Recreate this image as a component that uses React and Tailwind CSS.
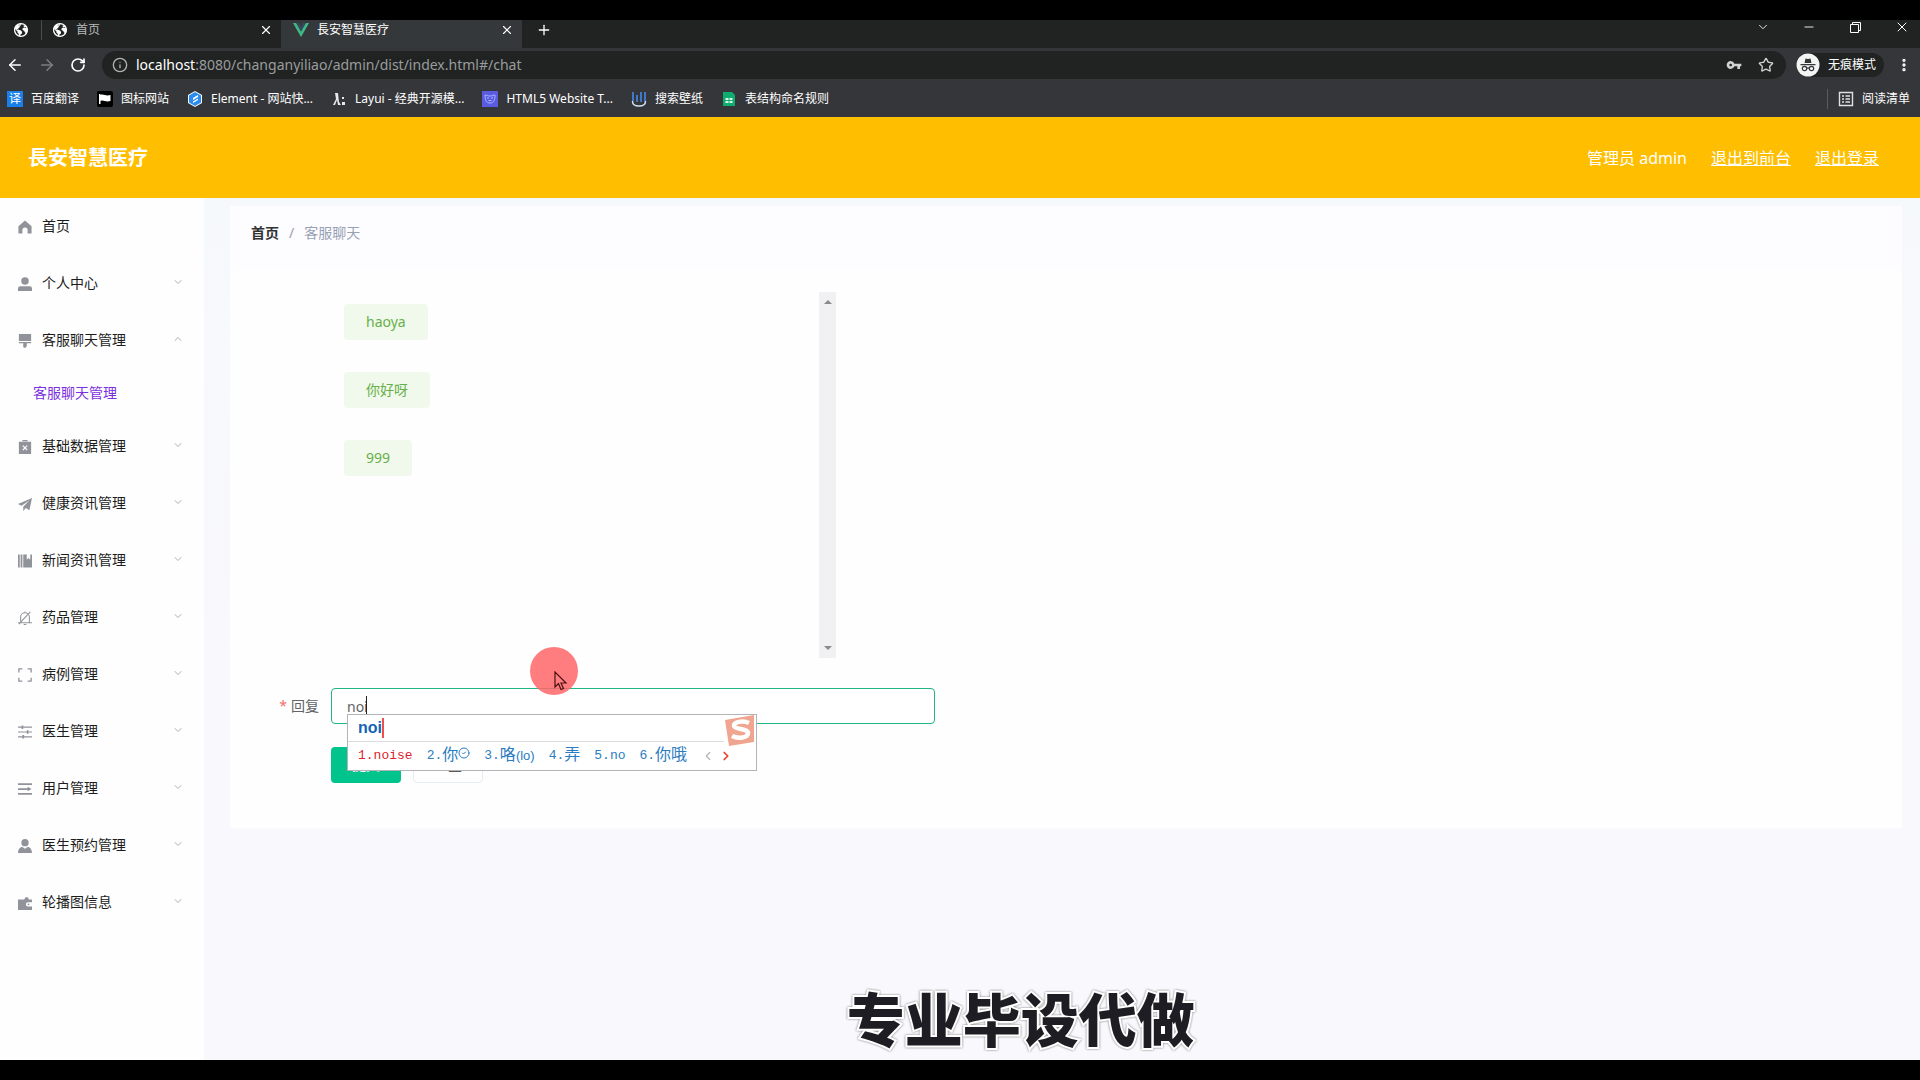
import { ArrowLeft, ArrowRight, RotateCw, Info, X, Plus, ChevronDown, ChevronUp, ChevronLeft, ChevronRight, CircleCheck, Minus, Star, EllipsisVertical } from 'lucide-react';
import { useState } from 'react';
import { IoEarthSharp } from 'react-icons/io5';
import { MdVpnKey } from 'react-icons/md';

const IconHome = () => (
  <path d="M8 0.500 0.500 7v8.500h4.500v-4a3 3 0 0 1 6 0v4h4.500V7z" />
);

const IconUser = () => (
  <>
    <circle cx="8" cy="4.500" r="4.300" />
    <path d="M0 16v-3A2.500 2.500 0 0 1 2.500 10.500h11a2.500 2.500 0 0 1 2.500 2.500V16z" />
  </>
);

const IconBrush = () => (
  <path d="M1 0h14v8H1zM1 9h14v1.500H10V14l-2 2-2-1V10.500H1z" />
);

const IconClipboard = () => (
  <>
    <path d="M5 0h6v1.500H5zM1 2h14v14H1z" />
    <path d="m5.500 6.500 5 5m0-5-5 5" stroke="#fff" strokeWidth="1.400" />
  </>
);

const IconSend = () => <path d="M16 1 0 8l4 2L13 4 6 11v5l3-3.500 4 2.500z" />;

const IconNotebook = () => (
  <path d="M0 0.500h2v15H0zM3 0.500h2v15H3zM6 0.500h4v6l2-2 2 2V0.500h2v15H6z" />
);

const IconMuteBell = () => (
  <g fill="none" stroke="currentColor" strokeWidth="1.200">
    <path d="M0 13.500h16M3 13V7a5 5 0 0 1 10 0v6M8 2V0.500M6.500 15.500h3M1 15 14 1" />
  </g>
);

const IconFullScreen = () => (
  <path d="M1 5V1h4M11 1h4v4M15 11v4h-4M5 15H1v-4" fill="none" stroke="currentColor" strokeWidth="1.500" />
);

const IconSliders = () => (
  <g fill="none" stroke="currentColor" strokeWidth="1.400">
    <path d="M0 2.500h16M0 8h16M0 13.500h16" />
    <path d="M5 0.500v4M11 6v4M6 11.500v4" strokeWidth="2" />
  </g>
);

const IconOperation = () => (
  <path d="M0 1.500h16v2H0zM0 7h11V5.500L15.500 8 11 10.500V9H0zM0 12.500h16v2H0z" />
);

const IconCustomer = () => (
  <>
    <circle cx="8" cy="4.200" r="4.200" />
    <path d="M0 16c0-4 2-7 5-7l3 2 3-2c3 0 5 3 5 7z" />
  </>
);

const IconWallet = () => (
  <>
    <path d="M0 4h7l2-3 3 1v2h4v3h-4.500a2.500 2.500 0 0 0 0 5H16v4H0z" />
    <circle cx="12" cy="9.500" r="1" />
  </>
);

const menuItems = [
  { label: '首页', icon: IconHome, leaf: true },
  { label: '个人中心', icon: IconUser },
  { label: '客服聊天管理', icon: IconBrush, children: ['客服聊天管理'] },
  { label: '基础数据管理', icon: IconClipboard },
  { label: '健康资讯管理', icon: IconSend },
  { label: '新闻资讯管理', icon: IconNotebook },
  { label: '药品管理', icon: IconMuteBell },
  { label: '病例管理', icon: IconFullScreen },
  { label: '医生管理', icon: IconSliders },
  { label: '用户管理', icon: IconOperation },
  { label: '医生预约管理', icon: IconCustomer },
  { label: '轮播图信息', icon: IconWallet },
];

const messages = ['haoya', '你好呀', '999'];

const candidates = [
  { index: '1.', latin: 'noise', active: true },
  { index: '2.', text: '你', checked: true },
  { index: '3.', text: '咯', note: '(lo)' },
  { index: '4.', text: '弄' },
  { index: '5.', latin: 'no' },
  { index: '6.', text: '你哦' },
];

const bookmarks = [
  {
    label: '百度翻译',
    icon: (
      <span className="flex h-4 w-4 items-center justify-center bg-[#1a7fe8] text-xs leading-4 text-white">译</span>
    ),
  },
  {
    label: '图标网站',
    icon: (
      <svg viewBox="0 0 16 16" className="h-4 w-4">
        <rect width="16" height="16" rx="2" fill="#000" />
        <path d="M2 3h1.500v10H2zM3.500 4c3-1.500 5 1.500 10 0v6c-5 1.500-7-1.500-10 0z" fill="#fff" />
      </svg>
    ),
  },
  {
    label: 'Element - 网站快...',
    icon: (
      <svg viewBox="0 0 16 16" className="h-4 w-4">
        <path d="m8 0 7 4v8l-7 4-7-4V4z" fill="#fff" />
        <path d="m8 1 6 3.500v7L8 15l-6-3.500v-7z" fill="#2a8cf0" />
        <path d="m11 4-5 3v2l5-3zM11 7.500l-5 3v1.500l5-3z" fill="#fff" />
      </svg>
    ),
  },
  {
    label: 'Layui - 经典开源模...',
    icon: (
      <svg viewBox="0 0 16 16" className="h-4 w-4" fill="#e8e8e8">
        <path d="M4 2h3l1 9 2 3H7L6 9l-2 5H2l3-6z" />
        <path d="M11 6h2v2h-2zM11 11h3v3h-3z" />
      </svg>
    ),
  },
  {
    label: 'HTML5 Website T...',
    icon: (
      <svg viewBox="0 0 16 16" className="h-4 w-4">
        <rect width="16" height="16" fill="#5a5be0" />
        <path d="M3 4c2 0 2 1 5 1s3-1 5-1c0 5-1 8-5 8S3 9 3 4z" fill="none" stroke="#a9b8ff" />
        <path d="M5 7h2M9 7h2M6.500 9.500h3" stroke="#a9b8ff" />
      </svg>
    ),
  },
  {
    label: '搜索壁纸',
    icon: (
      <svg viewBox="0 0 16 16" className="h-4 w-4" fill="none">
        <path d="M2 1v9M6 4v7M10 1v10M14 1v9" stroke="#3f78c8" strokeWidth="2" />
        <path d="M1.500 10c0 3 1 5 6.500 5s6.500-2 6.500-5" stroke="#cfe4fa" strokeWidth="1.500" />
      </svg>
    ),
  },
  {
    label: '表结构命名规则',
    icon: (
      <svg viewBox="0 0 16 16" className="h-4 w-4">
        <path d="M2 1h9l3 3v11H2z" fill="#0fae6e" />
        <path d="M4.500 7h3v2h-3zM8.500 7h3v2h-3zM4.500 10h3v2h-3zM8.500 10h3v2h-3z" fill="#d8f5e8" />
      </svg>
    ),
  },
];

const VueLogo = () => (
  <svg viewBox="0 0 16 14" className="h-4 w-4">
    <path d="M0 0h3.200L8 8.500 12.800 0H16L8 14z" fill="#41b883" />
    <path d="M3.200 0H6l2 3.500L10 0h2.800L8 8.500z" fill="#35495e" />
  </svg>
);

const TabStrip = () => (
  <div className="flex h-7 bg-[#202322] text-xs">
    <div className="flex w-[41px] items-center justify-center pb-2">
      <IoEarthSharp className="h-4 w-4" />
    </div>
    <div className="flex w-60 items-center gap-2 pr-2 pb-2">
      <span className="h-5 border-l border-[#4a4c4e] pr-0.5" />
      <IoEarthSharp className="h-4 w-4" />
      <span className="flex-1 text-[#b8babd]">首页</span>
      <button aria-label="关闭标签页"><X className="h-3.5 w-3.5" /></button>
    </div>
    <div className="flex w-[241px] items-center gap-2 bg-[#35383a] pr-2 pb-2 pl-3">
      <VueLogo />
      <span className="flex-1">長安智慧医疗</span>
      <button aria-label="关闭标签页"><X className="h-3.5 w-3.5" /></button>
    </div>
    <button aria-label="新标签页" className="ml-3.5 pb-2"><Plus className="h-4 w-4" /></button>
    <div className="ml-auto flex items-center gap-8 pr-2.5 pb-3.5">
      <button aria-label="标签页搜索"><ChevronDown className="h-3.5 w-3.5" strokeWidth={1.5} /></button>
      <button aria-label="最小化"><Minus className="h-3.5 w-3.5" strokeWidth={1.5} /></button>
      <button aria-label="还原">
        <svg viewBox="0 0 14 14" className="h-3.5 w-3.5" fill="none" stroke="currentColor">
          <path d="M2.500 4.500h8v8h-8zM4.500 4.500v-2h8v8h-2" />
        </svg>
      </button>
      <button aria-label="关闭"><X className="h-4 w-4" strokeWidth={1.5} /></button>
    </div>
  </div>
);

const AddressBar = () => (
  <div className="flex h-[34px] items-center pr-2 pl-1.5">
    <button aria-label="后退"><ArrowLeft className="h-[18px] w-[18px]" /></button>
    <button aria-label="前进" className="ml-3.5 text-[#7c7e81]"><ArrowRight className="h-[18px] w-[18px]" /></button>
    <button aria-label="重新加载" className="ml-3.5"><RotateCw className="h-4 w-4" strokeWidth={2.5} /></button>
    <div className="ml-4 flex h-7 flex-1 items-center gap-2 rounded-full bg-[#202322] pr-2 pl-2.5">
      <Info className="h-4 w-4 text-[#b0b2b4]" />
      <p className="flex-1 text-sm text-[#9a9c9e]">
        <span className="text-white">localhost</span>:8080/changanyiliao/admin/dist/index.html#/chat
      </p>
      <MdVpnKey className="h-4 w-4 text-[#d0d2d4]" />
      <Star className="mr-1 ml-2 h-4 w-4 text-[#d0d2d4]" />
    </div>
    <div className="ml-2.5 flex h-6 items-center gap-2 rounded-full bg-[#202322] pr-2 text-xs">
      <svg viewBox="0 0 24 24" className="h-6 w-6">
        <circle cx="12" cy="12" r="11.500" fill="#f4f4f4" />
        <path d="M8.500 10 9.500 5.500l2.500.5 2.500-.5 1 4.500zM4.500 11h15v1.300h-15z" fill="#35363a" />
        <g fill="none" stroke="#35363a" strokeWidth="1.200">
          <circle cx="8.500" cy="15.500" r="2.200" />
          <circle cx="15.500" cy="15.500" r="2.200" />
          <path d="M10.700 15.200q1.300-.8 2.600 0" />
        </g>
      </svg>
      无痕模式
    </div>
    <button aria-label="菜单" className="ml-3"><EllipsisVertical className="h-4 w-4" strokeWidth={3} /></button>
  </div>
);

const BookmarkBar = () => (
  <div className="flex h-[35px] items-center gap-[18px] pr-2.5 pb-0.5 pl-[7px] text-xs">
    {bookmarks.map((bookmark) => (
      <a key={bookmark.label} href="#" className="flex items-center gap-2">
        {bookmark.icon}
        <span>{bookmark.label}</span>
      </a>
    ))}
    <button className="ml-auto flex h-5 items-center gap-2 border-l border-[#5a5b5e] pl-2.5">
      <svg viewBox="0 0 16 16" className="h-4 w-4" fill="none" stroke="#e0e0e0" strokeWidth="1.400">
        <path d="M1.500 1.500h13v13h-13zM4 5h2M7.500 5H12M4 8h2M7.500 8H12M4 11h2M7.500 11H12" />
      </svg>
      阅读清单
    </button>
  </div>
);

const AdminHeader = () => (
  <header className="flex h-[81px] items-center justify-between bg-[#ffbe00] pr-[41px] pl-7 text-white">
    <h1 className="text-xl font-bold">長安智慧医疗</h1>
    <div className="flex gap-6 text-base">
      <span>管理员 admin</span>
      <a href="#/front" className="underline">退出到前台</a>
      <a href="#/login" className="underline">退出登录</a>
    </div>
  </header>
);

const Sidebar = () => (
  <nav className="w-[204px] shrink-0 bg-[#fefefe] text-sm text-[#1c1c1c]">
    <ul>
      {menuItems.map((item) => {
        const Icon = item.icon;
        const Chevron = item.children ? ChevronUp : ChevronDown;

        return (
          <li key={item.label}>
            <button className="flex h-[57px] w-full items-center pr-5 pb-0.5 pl-[18px] text-left">
              <svg viewBox="0 0 16 16" className="mt-0.5 h-3.5 w-3.5 text-[#909399]" fill="currentColor">
                <Icon />
              </svg>
              <span className="ml-2.5 flex-1">{item.label}</span>
              {!item.leaf && <Chevron className="mb-0.5 h-3 w-3 text-[#909399]" strokeWidth={1.5} />}
            </button>
            {item.children?.map((child) => (
              <a key={child} href="#/chat" className="flex h-[49px] items-center pb-0.5 pl-[33px] text-[#7a2fe0]">{child}</a>
            ))}
          </li>
        );
      })}
    </ul>
  </nav>
);

const ImePopup = () => (
  <div className="absolute top-[26px] left-4 z-10 w-[410px] border border-[#b4b4b8] bg-white">
    <div className="mr-8 flex h-[27px] items-center border-b border-[#dcdce0] pl-2.5 font-['Liberation_Sans','Noto_Sans_CJK_SC',sans-serif] text-base font-bold text-[#1463b4]">
      noi<span className="h-5 w-0.5 bg-[#f0504c]" />
    </div>
    <div className="flex h-7 items-center gap-3.5 pl-2.5 font-['Liberation_Mono','Noto_Sans_CJK_SC',monospace] text-[13px] text-[#2b7cc0]">
      {candidates.map((candidate) => (
        <span key={candidate.index} className={`flex items-center ${candidate.active ? 'text-[#dc2430]' : ''}`}>
          {candidate.index}
          {candidate.latin}
          <span className="text-base leading-5">{candidate.text}</span>
          {candidate.checked && <CircleCheck className="mb-1.5 h-3 w-3" />}
          {candidate.note && <span className="font-['Liberation_Sans',sans-serif]">{candidate.note}</span>}
        </span>
      ))}
      <span className="flex gap-1">
        <ChevronLeft className="h-3.5 w-3.5 text-[#b4b4b8]" />
        <ChevronRight className="h-3.5 w-3.5 text-[#e8402c]" strokeWidth={3} />
      </span>
    </div>
    <svg viewBox="0 0 32 32" className="absolute top-0 right-0 h-8 w-8">
      <path d="M1 5 30 0v27L5 31z" fill="#f0a590" />
      <path d="M25 8c-6-3-16-1-15 3s14 2 14 7-10 6-16 3" fill="none" stroke="#fff" strokeWidth="4.500" />
    </svg>
  </div>
);

const ClickMarker = () => (
  <div className="pointer-events-none absolute -top-[41px] left-[199px] h-12 w-12 rounded-full bg-[#ff6568]/85">
    <svg viewBox="0 0 14 20" className="mt-6 ml-6 h-5 w-3.5">
      <path d="M1 1v15l3.500-3.500L7 18.500l2.500-1-2.500-5.500h5z" fill="#ff7f80" stroke="#4a1010" strokeWidth="1.200" />
    </svg>
  </div>
);

const ChatCard = () => {
  const [reply, setReply] = useState('noi');

  const handleSubmit = (event) => {
    event.preventDefault();
    setReply('');
  };

  return (
    <section className="rounded bg-[#fefefe] pt-[22px] pb-[45px]">
      <div className="ml-[101px] flex h-[366px] w-[505px]">
        <div className="flex flex-1 flex-col items-start gap-8 pt-3 pl-[13px]">
          {messages.map((message) => (
            <p key={message} className="flex h-9 items-center rounded bg-[#f0f9eb] px-[22px] text-sm text-[#67b04a]">{message}</p>
          ))}
        </div>
        <div className="flex w-[17px] flex-col items-center justify-between bg-[#f1f0f2] py-2">
          <span className="border-x-4 border-b-4 border-x-transparent border-b-[#8a8a8a]" />
          <span className="border-x-4 border-t-4 border-x-transparent border-t-[#8a8a8a]" />
        </div>
      </div>

      <form onSubmit={handleSubmit} className="mt-[30px] text-sm">
        <div className="flex items-center">
          <label htmlFor="reply" className="w-[101px] pr-3 text-right text-[#606266]">
            <span className="mr-1 text-[#f56c6c]">*</span>回复
          </label>
          <div className="relative w-[604px]">
            <input
              id="reply"
              value={reply}
              onChange={(event) => setReply(event.target.value)}
              className="block h-9 w-full rounded border border-[#1fb584] bg-white px-[15px] text-[#606266] outline-none"
            />
            <span className="absolute top-2 left-[35px] h-5 w-px bg-[#222]" />
            <ClickMarker />
            <ImePopup />
          </div>
        </div>
        <div className="mt-[23px] ml-[101px] flex gap-3">
          <button type="submit" className="h-9 w-[70px] rounded bg-[#00c48c] text-white">提交</button>
          <button type="button" onClick={() => setReply('')} className="h-9 w-[70px] rounded border border-[#e6ecf0] bg-white text-[#333]">重置</button>
        </div>
      </form>
    </section>
  );
};

export default function App() {
  return (
    <div className="relative flex min-h-screen flex-col border-y-[20px] border-black bg-[#f9f8fd] font-['Noto_Sans','Noto_Sans_CJK_SC',sans-serif]">
      <div className="bg-[#35363a] text-white">
        <TabStrip />
        <AddressBar />
        <BookmarkBar />
      </div>
      <AdminHeader />
      <div className="flex flex-1">
        <Sidebar />
        <main className="flex-1 bg-linear-to-b from-[#f6f9fb] to-[#f9f8fd] to-60% pt-2 pr-[18px] pl-[26px]">
          <nav aria-label="面包屑" className="flex h-16 items-center gap-2.5 bg-[#fdfcfe] pb-2.5 pl-[21px] text-sm text-[#97a0b4]">
            <a href="#/" className="font-bold text-[#303133]">首页</a>
            <span>/</span>
            <span>客服聊天</span>
          </nav>
          <ChatCard />
        </main>
      </div>
      <p className="absolute bottom-0 left-[44.1%] text-[58px] leading-[80px] font-black text-[#1f1d24] [-webkit-text-stroke:4px_#fff] [paint-order:stroke_fill] drop-shadow-[0_0_1px_#777]">专业毕设代做</p>
    </div>
  );
}
